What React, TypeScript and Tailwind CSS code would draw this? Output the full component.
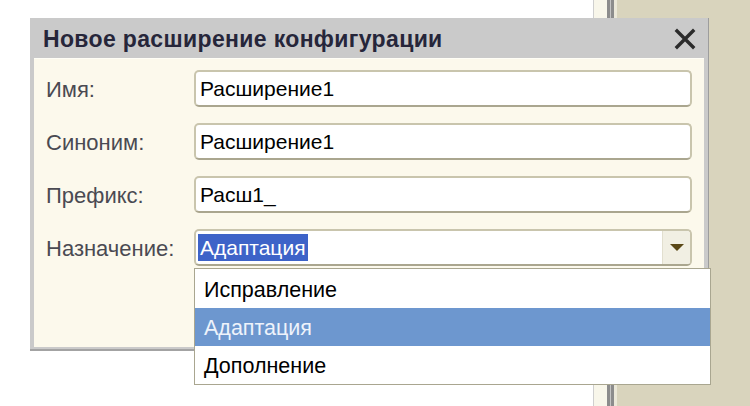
import React from "react";

const font = "font-['Liberation_Sans',Arial,sans-serif]";

function Field({ label, value }: { label: string; value: string }) {
  return (
    <div className="flex items-center h-[37px]">
      <div className="w-[148px] text-[22px] text-[#4a4a52] leading-none pt-[2px]">{label}</div>
      <div className="flex-1 h-full rounded-[5px] border-2 border-[#c9c5ad] border-b-[#aaa68f] bg-white flex items-center pl-[4px] text-[21px] text-black leading-none">
        {value}
      </div>
    </div>
  );
}

export default function App() {
  return (
    <div className={`relative w-[750px] h-[406px] flex overflow-hidden bg-white ${font}`}>
      {/* desktop behind the dialog */}
      <div className="w-[593px] bg-white" />
      <div className="w-px bg-[#cfcfcf]" />
      <div className="w-[13px] bg-[#f8f6ea]" />
      <div className="w-[3px] bg-[#8c8c8c]" />
      <div className="w-px bg-[#c4c4c4]" />
      <div className="w-[3px] bg-[#8c8c8c]" />
      <div className="w-[3px] bg-[#ebe8d9]" />
      <div className="flex-1 bg-[#d9d4bd]" />

      {/* dialog window */}
      <div className="absolute left-[30px] top-[18px] w-[679px] h-[333px] bg-[#cacaca] border-r border-b-[2px] border-r-[#9d9d9d] border-b-[#a3a3a3] flex flex-col pl-[4px] pr-[4px] pb-[2px]">
        <div className="h-[40px] flex items-center justify-between pl-[9px] pr-[8px] shrink-0">
          <span className="text-[23px] font-bold text-[#26263a] leading-none tracking-[0.35px] pt-[2px]">Новое расширение конфигурации</span>
          <svg width="22" height="22" viewBox="0 0 22 22" className="mt-[1px]">
            <path d="M3 3 L19 19 M19 3 L3 19" stroke="#2b2b2b" strokeWidth="3.4" strokeLinecap="square" />
          </svg>
        </div>
        <div className="flex-1 bg-[#fcf9ec] border-t border-t-[#fffef6] pl-[12px] pr-[12px] pt-[11px] flex flex-col gap-[16px]">
          <Field label="Имя:" value="Расширение1" />
          <Field label="Синоним:" value="Расширение1" />
          <Field label="Префикс:" value="Расш1_" />
          <div className="flex items-center h-[37px]">
            <div className="w-[148px] text-[22px] text-[#4a4a52] leading-none pt-[2px]">Назначение:</div>
            <div className="flex-1 h-full rounded-[5px] border-2 border-[#c9c5ad] border-b-[#aaa68f] bg-white flex items-stretch overflow-hidden">
              <div className="flex-1 flex items-center pl-[2px]">
                <span className="bg-[#3d63c8] text-white text-[21px] leading-none px-[2px] py-[3px]">Адаптация</span>
              </div>
              <div className="w-[28px] bg-[#f1efe3] border-l border-l-[#e2dfcf] flex items-center justify-center">
                <svg width="14" height="7" viewBox="0 0 14 7">
                  <path d="M0 0 H14 L7 7 Z" fill="#5a4816" />
                </svg>
              </div>
            </div>
          </div>
        </div>
      </div>

      {/* open list of the combo box */}
      <div className="absolute left-[194px] top-[268px] w-[517px] h-[117px] bg-white border border-[#a9a690] flex flex-col text-[21.5px] leading-none">
        <div className="h-[39px] flex items-center pl-[9px] pt-[4px] text-black">Исправление</div>
        <div className="h-[38px] flex items-center pl-[9px] pt-[4px] bg-[#6d97cf] text-[#eef3fb]">Адаптация</div>
        <div className="h-[38px] flex items-center pl-[9px] pt-[4px] text-black">Дополнение</div>
      </div>
    </div>
  );
}
